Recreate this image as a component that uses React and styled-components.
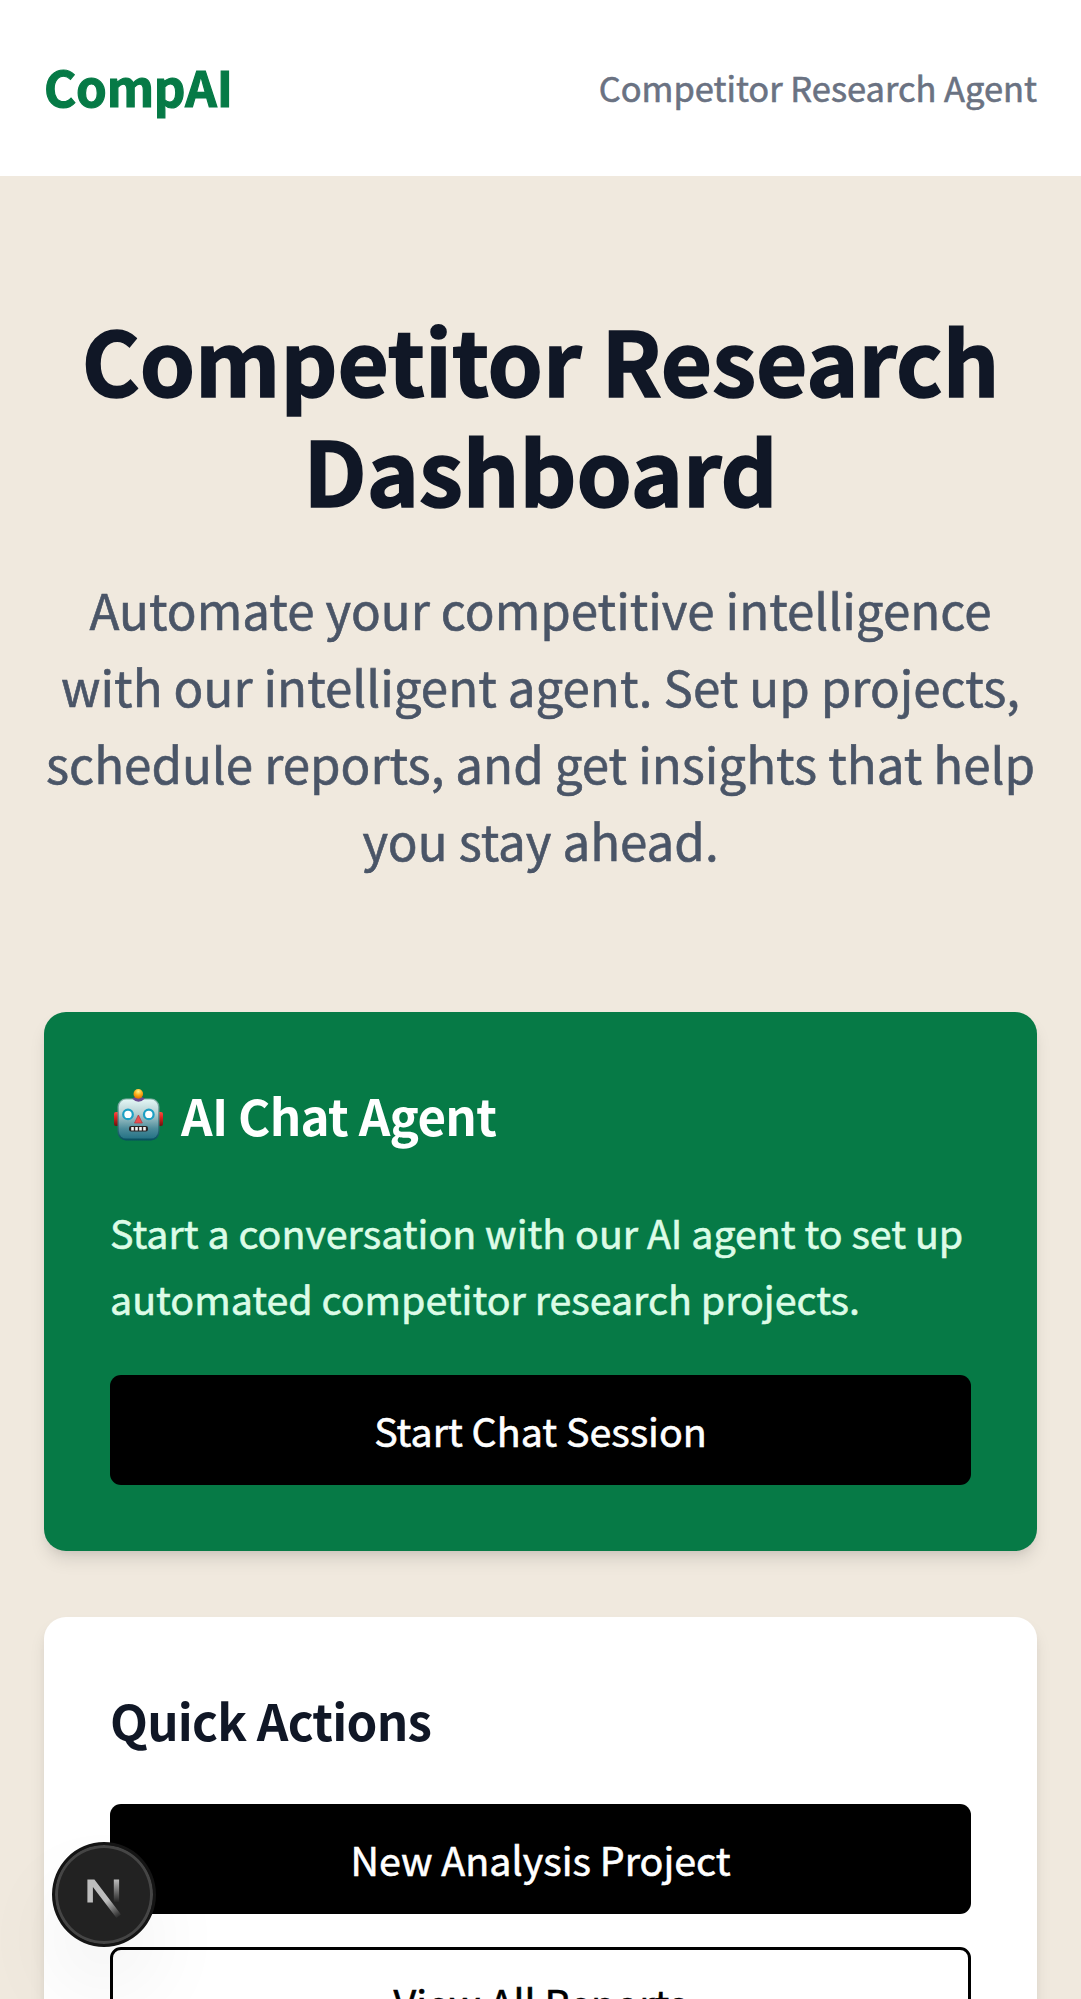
import React from "react";
import styled, { createGlobalStyle } from "styled-components";

const GlobalStyle = createGlobalStyle`
  *, *::before, *::after { box-sizing: border-box; }
  html { overflow: hidden; }
  body {
    margin: 0;
    height: 1999px;
    overflow: hidden;
    background: #f0e9de;
    font-family: "Noto Sans CJK SC", "Noto Sans", sans-serif;
    font-kerning: normal;
    -webkit-text-stroke: 0.6px currentColor;
  }
  h1, h2, p { margin: 0; }
`;

const Page = styled.div`
  height: 1999px;
  overflow: hidden;
  background: #f0e9de;
`;

const Header = styled.header`
  display: flex;
  align-items: center;
  justify-content: space-between;
  height: 176px;
  padding: 0 44px;
  background: #fff;
`;

const Brand = styled.span`
  padding-bottom: 5px;
  font-size: 49.2px;
  line-height: 72px;
  font-weight: 700;
  letter-spacing: -0.2px;
  color: #067a46;
  -webkit-text-stroke-width: 1.2px;
`;

const Tagline = styled.span`
  padding-bottom: 2px;
  font-size: 34.45px;
  line-height: 53px;
  color: #6a7282;
`;

const Main = styled.main`
  padding: 132px 44px 0;
`;

const Hero = styled.section`
  text-align: center;
  margin-bottom: 134px;
`;

const HeroTitle = styled.h1`
  margin-top: -5px;
  margin-bottom: 47px;
  font-size: 88.5px;
  line-height: 110px;
  font-weight: 700;
  color: #101726;
  -webkit-text-stroke-width: 1.6px;
`;

const HeroText = styled.p`
  font-size: 49.27px;
  line-height: 77px;
  color: #4a5567;
  white-space: nowrap;
`;

const Cards = styled.div`
  display: flex;
  flex-direction: column;
  gap: 66px;
`;

const Card = styled.section`
  padding: 66px;
  border-radius: 22px;
  background: ${(p) => (p.$green ? "#067a46" : "#fff")};
  box-shadow: 0 11px 16.5px -2.75px rgba(0, 0, 0, 0.1),
    0 5.5px 11px -5.5px rgba(0, 0, 0, 0.1);
`;

const CardTitle = styled.h2`
  display: flex;
  align-items: center;
  gap: 18px;
  height: 77px;
  padding-bottom: 3px;
  padding-left: ${(p) => (p.$icon ? "4px" : "0")};
  margin-bottom: 44px;
  font-size: 49.3px;
  line-height: 74px;
  font-weight: 700;
  letter-spacing: ${(p) => (p.$icon ? "-0.68px" : "-0.75px")};
  color: ${(p) => p.$color};
  -webkit-text-stroke-width: 0;
`;

const CardText = styled.p`
  font-size: 39.38px;
  line-height: 66px;
  color: #dcfce7;
  margin-bottom: 44px;
  white-space: nowrap;
`;

const Button = styled.button`
  display: block;
  width: 100%;
  height: 110px;
  padding: 0 0 1px;
  border: ${(p) => (p.$outline ? "3px solid #000" : "0")};
  border-radius: 11px;
  background: ${(p) => (p.$outline ? "transparent" : "#000")};
  color: ${(p) => (p.$outline ? "#000" : "#fff")};
  font-family: inherit;
  font-size: 39.4px;
  line-height: 66px;
  font-weight: 400;
`;

const Actions = styled.div`
  display: flex;
  flex-direction: column;
  gap: 33px;
`;

const DevBadge = styled.div`
  position: fixed;
  left: 52px;
  top: 1842px;
  width: 104px;
  height: 105px;
  border-radius: 50%;
  display: flex;
  align-items: center;
  justify-content: center;
  background: #222;
  border: 3px solid #141414;
  box-shadow: inset 0 0 0 3px #454545, 0 44px 88px rgba(0, 0, 0, 0.06);
`;

const Robot = () => (
  <svg width="49" height="52" viewBox="0 0 49 52" aria-hidden="true">
    <defs>
      <linearGradient id="face" x1="0" y1="0" x2="0" y2="1">
        <stop offset="0" stopColor="#e3f6f5" />
        <stop offset="0.35" stopColor="#b5d0d2" />
        <stop offset="0.75" stopColor="#4b8b9a" />
        <stop offset="1" stopColor="#257285" />
      </linearGradient>
      <linearGradient id="rim" x1="0" y1="0" x2="0" y2="1">
        <stop offset="0" stopColor="#89b5aa" />
        <stop offset="1" stopColor="#074f60" />
      </linearGradient>
      <linearGradient id="ear" x1="0" y1="0" x2="0" y2="1">
        <stop offset="0" stopColor="#ff4a3f" />
        <stop offset="0.4" stopColor="#d9231f" />
        <stop offset="1" stopColor="#69150f" />
      </linearGradient>
      <radialGradient id="bulb" cx="0.5" cy="0.25" r="0.7">
        <stop offset="0" stopColor="#fff48a" />
        <stop offset="0.5" stopColor="#ffb31f" />
        <stop offset="1" stopColor="#e27800" />
      </radialGradient>
    </defs>
    <rect x="0" y="23" width="6" height="14" rx="2" fill="url(#ear)" />
    <rect x="43" y="23" width="6" height="14" rx="2" fill="url(#ear)" />
    <rect x="3.5" y="9.5" width="42" height="42" rx="8.5" fill="url(#rim)" />
    <rect x="4.8" y="10.6" width="39.4" height="39" rx="7.5" fill="url(#face)" />
    <path d="M18 9.5 Q24.5 5.5 31 9.5 Q24.5 16 18 9.5Z" fill="#6b4a91" />
    <circle cx="24.3" cy="4.9" r="4.8" fill="url(#bulb)" />
    <circle cx="14" cy="25.4" r="4.8" fill="#fff" stroke="#1b9fc4" strokeWidth="2.2" />
    <circle cx="34.8" cy="25.4" r="4.8" fill="#fff" stroke="#1b9fc4" strokeWidth="2.2" />
    <path d="M24.4 26 L28.3 34 H20.5Z" fill="#ee4c4c" stroke="#b23b48" strokeWidth="0.8" />
    <rect x="15" y="37" width="19" height="5.4" rx="2.2" fill="#2b2424" />
    <path d="M17.2 38h2.6v3.4h-2.6zM21.2 38h2.6v3.4h-2.6zM25.2 38h2.6v3.4h-2.6zM29.2 38h2.6v3.4h-2.6z" fill="#f4f4f4" />
  </svg>
);

const NextMark = () => (
  <svg width="36" height="48" viewBox="0 0 36 48" aria-hidden="true">
    <defs>
      <linearGradient id="diag" gradientUnits="userSpaceOnUse" x1="22" y1="29" x2="34" y2="46">
        <stop offset="0" stopColor="#bdbdbd" />
        <stop offset="1" stopColor="#bdbdbd" stopOpacity="0" />
      </linearGradient>
      <linearGradient id="stem" x1="0" y1="0" x2="0" y2="1">
        <stop offset="0" stopColor="#bdbdbd" />
        <stop offset="1" stopColor="#bdbdbd" stopOpacity="0" />
      </linearGradient>
    </defs>
    <path d="M1.4 8.500H8.400L35 43.500L30.500 47L6.900 16V31.500H1.400Z" fill="url(#diag)" />
    <rect x="27.800" y="8.500" width="5.300" height="23" fill="url(#stem)" />
  </svg>
);

export default function App() {
  return (
    <Page>
      <GlobalStyle />
      <Header>
        <Brand>CompAI</Brand>
        <Tagline>Competitor Research Agent</Tagline>
      </Header>
      <Main>
        <Hero>
          <HeroTitle>
            Competitor Research
            <br />
            Dashboard
          </HeroTitle>
          <HeroText>
            Automate your competitive intelligence
            <br />
            with our intelligent agent. Set up projects,
            <br />
            schedule reports, and get insights that help
            <br />
            you stay ahead.
          </HeroText>
        </Hero>
        <Cards>
          <Card $green>
            <CardTitle $color="#fff" $icon>
              <Robot />
              AI Chat Agent
            </CardTitle>
            <CardText>
              Start a conversation with our AI agent to set up
              <br />
              automated competitor research projects.
            </CardText>
            <Button>Start Chat Session</Button>
          </Card>
          <Card>
            <CardTitle $color="#101726">Quick Actions</CardTitle>
            <Actions>
              <Button>New Analysis Project</Button>
              <Button $outline>View All Reports</Button>
            </Actions>
          </Card>
        </Cards>
      </Main>
      <DevBadge>
        <NextMark />
      </DevBadge>
    </Page>
  );
}
